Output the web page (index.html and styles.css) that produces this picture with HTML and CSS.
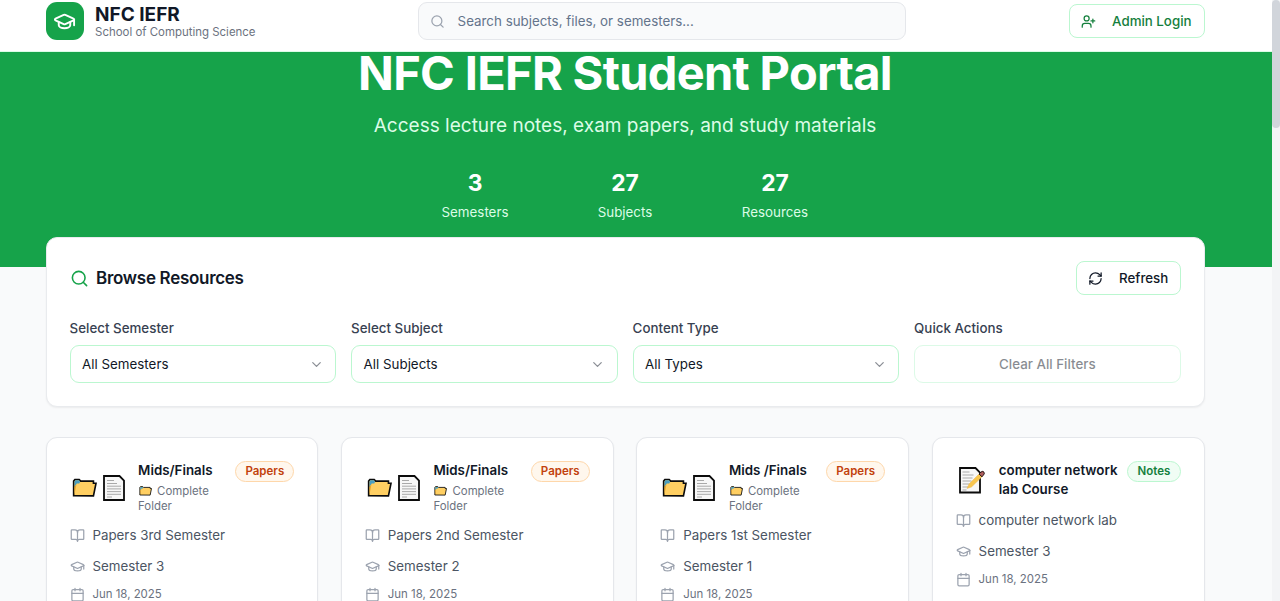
FILE: index.html
```html
<!DOCTYPE html>
<html lang="en">
<head>
<meta charset="utf-8">
<title>NFC IEFR Student Portal</title>
<link rel="stylesheet" href="styles.css">
</head>
<body>
<svg class="sprite" aria-hidden="true">
  <symbol id="cap" viewBox="0 0 24 24"><path d="M21.42 10.922a1 1 0 0 0-.019-1.838L12.83 5.18a2 2 0 0 0-1.66 0L2.6 9.08a1 1 0 0 0 0 1.832l8.57 3.908a2 2 0 0 0 1.66 0z"/><path d="M22 10v6"/><path d="M6 12.5V16a6 3 0 0 0 12 0v-3.5"/></symbol>
  <symbol id="search" viewBox="0 0 24 24"><circle cx="11" cy="11" r="8"/><path d="m21 21-4.3-4.3"/></symbol>
  <symbol id="user-plus" viewBox="0 0 24 24"><path d="M16 21v-2a4 4 0 0 0-4-4H6a4 4 0 0 0-4 4v2"/><circle cx="9" cy="7" r="4"/><path d="M19 8v6M22 11h-6"/></symbol>
  <symbol id="refresh" viewBox="0 0 24 24"><path d="M3 12a9 9 0 0 1 9-9 9.75 9.75 0 0 1 6.74 2.74L21 8"/><path d="M21 3v5h-5"/><path d="M21 12a9 9 0 0 1-9 9 9.75 9.75 0 0 1-6.74-2.74L3 16"/><path d="M8 16H3v5"/></symbol>
  <symbol id="chevron" viewBox="0 0 24 24"><path d="m6 9 6 6 6-6"/></symbol>
  <symbol id="book" viewBox="0 0 24 24"><path d="M12 7v14"/><path d="M3 18a1 1 0 0 1-1-1V4a1 1 0 0 1 1-1h5a4 4 0 0 1 4 4 4 4 0 0 1 4-4h5a1 1 0 0 1 1 1v13a1 1 0 0 1-1 1h-6a3 3 0 0 0-3 3 3 3 0 0 0-3-3z"/></symbol>
  <symbol id="calendar" viewBox="0 0 24 24"><path d="M8 2v4M16 2v4"/><rect width="18" height="18" x="3" y="4" rx="2"/><path d="M3 10h18"/></symbol>
  <symbol id="folder" viewBox="0 0 26 20"><path d="M1.7 18V2.8L3 1.2h4.5l1.5 1.6h13.3V5H25l-2.7 13.2z" fill="#ffcf62" stroke="#0b0b0b" stroke-width="1.7" stroke-linejoin="miter"/><path d="M2.6 3.2 3.5 2h3.8l1.2 1.5L7.5 5.200H5L2.600 9z" fill="#4a9ec0" stroke="none"/><path d="M2.600 9v8l2-11z" fill="#e9a62c" stroke="none"/></symbol>
  <symbol id="page" viewBox="0 0 22 26"><path d="M1 1h15.500L21 5.500V25H1z" fill="#f7f7f7" stroke="#0b0b0b" stroke-width="1.800"/><path d="M4 5.500h7M4 8.500h10M4 11.200h14M4 13.900h14M4 16.600h14M4 19.300h14M4 22h5" stroke="#a9a9a9" stroke-width="1" fill="none"/></symbol>
  <symbol id="memo" viewBox="0 0 27 28"><path d="M2 2h15.500l4.500 4.500V26.500H2z" fill="#f7f7f7" stroke="#0b0b0b" stroke-width="1.800"/><path d="M4.500 6h7M4.500 9h11M4.500 12h10M4.500 15h9M4.500 18h7M4.500 21h6M4.500 24h4" stroke="#a9a9a9" stroke-width="1" fill="none"/><path d="m9 22.500 2-4.500L21.500 7.500l3 2.800L13.500 21z" fill="#f8c64f" stroke="#e8ad45" stroke-width=".4"/><path d="m21 8 2-2q2-1.400 3 .2t-.7 3L24 10.800z" fill="#ae5c5c" stroke="#251515" stroke-width="1"/></symbol>
</svg>

<div class="page">
  <header class="header">
    <div class="header-inner">
      <div class="brand">
        <div class="brand-mark"><svg class="icon brand-icon"><use href="#cap"/></svg></div>
        <div class="brand-text">
          <div class="brand-name">NFC IEFR</div>
          <div class="brand-sub">School of Computing Science</div>
        </div>
      </div>
      <div class="search"><svg class="icon"><use href="#search"/></svg><span class="search-text">Search subjects, files, or semesters...</span></div>
      <button class="button login"><svg class="icon"><use href="#user-plus"/></svg><span>Admin Login</span></button>
    </div>
  </header>

  <section class="hero">
    <h1 class="hero-title">NFC IEFR Student Portal</h1>
    <p class="hero-sub">Access lecture notes, exam papers, and study materials</p>
    <div class="stats">
      <div class="stat"><div class="stat-value">3</div><div class="stat-label">Semesters</div></div>
      <div class="stat"><div class="stat-value">27</div><div class="stat-label">Subjects</div></div>
      <div class="stat"><div class="stat-value">27</div><div class="stat-label">Resources</div></div>
    </div>
  </section>

  <main class="main">
    <section class="panel filters">
      <div class="filters-head">
        <h2 class="filters-title"><svg class="icon title-icon"><use href="#search"/></svg><span>Browse Resources</span></h2>
        <button class="button refresh"><svg class="icon"><use href="#refresh"/></svg><span>Refresh</span></button>
      </div>
      <div class="filters-grid">
        <div class="field"><div class="label">Select Semester</div><div class="select"><span>All Semesters</span><svg class="icon chevron"><use href="#chevron"/></svg></div></div>
        <div class="field"><div class="label">Select Subject</div><div class="select"><span>All Subjects</span><svg class="icon chevron"><use href="#chevron"/></svg></div></div>
        <div class="field"><div class="label">Content Type</div><div class="select"><span>All Types</span><svg class="icon chevron"><use href="#chevron"/></svg></div></div>
        <div class="field"><div class="label">Quick Actions</div><div class="select clear">Clear All Filters</div></div>
      </div>
    </section>

    <section class="cards">
      <article class="panel card">
        <div class="card-head">
          <div class="emoji"><svg class="folder"><use href="#folder"/></svg><svg class="paper"><use href="#page"/></svg></div>
          <div class="card-text"><h3 class="card-title">Mids/Finals</h3><p class="card-note"><svg class="folder-small"><use href="#folder"/></svg>Complete Folder</p></div>
          <span class="badge papers">Papers</span>
        </div>
        <div class="row"><svg class="icon"><use href="#book"/></svg><span>Papers 3rd Semester</span></div>
        <div class="row"><svg class="icon"><use href="#cap"/></svg><span>Semester 3</span></div>
        <div class="row date"><svg class="icon"><use href="#calendar"/></svg><span>Jun 18, 2025</span></div>
      </article>
      <article class="panel card">
        <div class="card-head">
          <div class="emoji"><svg class="folder"><use href="#folder"/></svg><svg class="paper"><use href="#page"/></svg></div>
          <div class="card-text"><h3 class="card-title">Mids/Finals</h3><p class="card-note"><svg class="folder-small"><use href="#folder"/></svg>Complete Folder</p></div>
          <span class="badge papers">Papers</span>
        </div>
        <div class="row"><svg class="icon"><use href="#book"/></svg><span>Papers 2nd Semester</span></div>
        <div class="row"><svg class="icon"><use href="#cap"/></svg><span>Semester 2</span></div>
        <div class="row date"><svg class="icon"><use href="#calendar"/></svg><span>Jun 18, 2025</span></div>
      </article>
      <article class="panel card">
        <div class="card-head">
          <div class="emoji"><svg class="folder"><use href="#folder"/></svg><svg class="paper"><use href="#page"/></svg></div>
          <div class="card-text"><h3 class="card-title">Mids /Finals</h3><p class="card-note"><svg class="folder-small"><use href="#folder"/></svg>Complete Folder</p></div>
          <span class="badge papers">Papers</span>
        </div>
        <div class="row"><svg class="icon"><use href="#book"/></svg><span>Papers 1st Semester</span></div>
        <div class="row"><svg class="icon"><use href="#cap"/></svg><span>Semester 1</span></div>
        <div class="row date"><svg class="icon"><use href="#calendar"/></svg><span>Jun 18, 2025</span></div>
      </article>
      <article class="panel card">
        <div class="card-head notes-head">
          <div class="emoji single"><svg class="memo"><use href="#memo"/></svg></div>
          <div class="card-text"><h3 class="card-title">computer network<br>lab Course</h3></div>
          <span class="badge notes">Notes</span>
        </div>
        <div class="row"><svg class="icon"><use href="#book"/></svg><span>computer network lab</span></div>
        <div class="row"><svg class="icon"><use href="#cap"/></svg><span>Semester 3</span></div>
        <div class="row date"><svg class="icon"><use href="#calendar"/></svg><span>Jun 18, 2025</span></div>
      </article>
    </section>
  </main>
</div>
<div class="scrollbar"><div class="scrollbar-thumb"></div></div>
</body>
</html>
```

FILE: styles.css
```css
* { box-sizing: border-box; }
body {
  margin: 0;
  height: 601px;
  overflow: hidden;
  display: flex;
  background: #f9fafb;
  color: #111827;
  font: 400 13.35px/19px Inter, sans-serif;
}
h1, h2, h3, p { margin: 0; }
.sprite { position: absolute; width: 0; height: 0; }
.icon {
  width: 15px;
  height: 15px;
  flex: none;
  fill: none;
  stroke: currentColor;
  stroke-width: 2;
  stroke-linecap: round;
  stroke-linejoin: round;
}
.page { width: 1272px; height: 601px; overflow: hidden; flex: none; }
.scrollbar { width: 8px; height: 601px; background: #f3f4f6; }
.scrollbar-thumb { height: 128px; border-radius: 4px; background: #d1d5db; }

.header {
  position: relative;
  z-index: 2;
  height: 52px;
  padding: 2px 67.4px 0 45.6px;
  background: #fff;
  border-bottom: 1px solid #dcfce7;
}
.header-inner { display: flex; justify-content: space-between; height: 38px; align-items: center; }
.brand { display: flex; gap: 11.500px; align-items: center; width: 210px; }
.brand-mark {
  width: 38px;
  height: 38px;
  border-radius: 11px;
  background: #16a34a;
  color: #fff;
  display: grid;
  place-items: center;
  flex: none;
}
.brand-icon { width: 23px; height: 23px; }
.brand-text { padding-top: 2px; }
.brand-name { font-size: 19px; line-height: 20px; font-weight: 700; white-space: nowrap; }
.brand-sub { font-size: 11.450px; line-height: 15px; color: #6b7280; white-space: nowrap; }
.search {
  width: 488px;
  height: 38px;
  display: flex;
  align-items: center;
  gap: 12.500px;
  padding-left: 11px;
  border: 1px solid #e5e7eb;
  border-radius: 9px;
  background: #f9fafb;
  color: #64748b;
}
.search .icon { color: #9ca3af; }
.search-text { padding-top: 1px; }
.button {
  font: 500 13.300px/19px Inter, sans-serif;
  height: 34px;
  display: flex;
  align-items: center;
  gap: 16px;
  padding: 0 11.500px;
  border: 1px solid #bbf7d0;
  border-radius: 8px;
  background: #fff;
  color: #111827;
  white-space: nowrap;
}
.login { width: 136px; color: #15803d; }

.hero {
  height: 218px;
  margin-top: -3px;
  padding-right: 22px;
  background: #16a34a;
  text-align: center;
  color: #fff;
}
.hero-title { font-size: 47px; line-height: 48px; font-weight: 700; letter-spacing: -.68px; white-space: nowrap; }
.hero-sub { margin-top: 14.500px; font-size: 19.050px; line-height: 28px; color: #dcfce7; }
.stats { display: flex; justify-content: center; margin-top: 28.500px; }
.stat { width: 150px; }
.stat-value { font-size: 22.800px; line-height: 30px; font-weight: 700; }
.stat-label { margin-top: 4px; line-height: 20px; color: #dcfce7; }

.main { margin: -30px 67.400px 0 45.600px; position: relative; }
.panel {
  background: #fff;
  border: 1px solid #e5e7eb;
  border-radius: 11px;
  box-shadow: 0 1px 2px rgba(0, 0, 0, .06);
}
.filters { height: 169.500px; padding: 23px; border-color: #e9ebee; }
.filters-head { display: flex; justify-content: space-between; align-items: center; }
.filters-title { display: flex; align-items: center; gap: 7.500px; font-size: 17px; line-height: 26px; font-weight: 600; letter-spacing: -.3px; }
.title-icon { width: 19px; height: 19px; color: #16a34a; }
.refresh { width: 105px; }
.filters-grid { display: grid; grid-template-columns: repeat(4, 1fr); gap: 15px; margin-top: 24px; }
.label { font-weight: 500; color: #374151; margin-bottom: 7px; }
.select {
  height: 38px;
  display: flex;
  align-items: center;
  justify-content: space-between;
  padding: 0 11.500px;
  border: 1px solid #bbf7d0;
  border-radius: 9px;
}
.chevron { color: #8b8f96; }
.clear { justify-content: center; font-weight: 500; opacity: .5; }

.cards { display: grid; grid-template-columns: repeat(4, 1fr); gap: 22.600px; margin-top: 30.500px; }
.card { height: 240px; padding: 23px; }
.card-head { display: flex; align-items: flex-start; height: 53px; margin-bottom: 12px; }
.notes-head { height: 38px; }
.emoji { display: flex; align-items: center; gap: 6px; width: 68.500px; height: 53px; padding-left: 2px; flex: none; }
.single { width: 43px; height: 38px; }
.folder { width: 25px; height: 20px; margin-top: 1px; }
.paper { width: 22px; height: 26px; }
.memo { width: 27px; height: 28px; }
.card-text { flex: 1; min-width: 0; }
.card-title { font-size: 13.350px; line-height: 19px; font-weight: 600; white-space: nowrap; }
.card-note { font-size: 11.400px; line-height: 15px; color: #6b7280; margin-top: 4px; width: 90px; }
.folder-small { width: 13px; height: 10px; margin: 0 5px 0 1px; vertical-align: -1px; }
.badge {
  height: 21px;
  padding: 0 9.200px;
  border: 1px solid;
  border-radius: 11px;
  font-size: 11.500px;
  line-height: 19px;
  font-weight: 600;
  flex: none;
}
.papers { color: #c2410c; background: #fff7ed; border-color: #fed7aa; }
.notes { color: #15803d; background: #f0fdf4; border-color: #bbf7d0; }
.row { display: flex; align-items: center; gap: 7.800px; height: 19px; margin-bottom: 11.500px; color: #4b5563; }
.row .icon { color: #9ca3af; }
.date { font-size: 11.450px; color: #6b7280; margin-top: -2px; }
```
